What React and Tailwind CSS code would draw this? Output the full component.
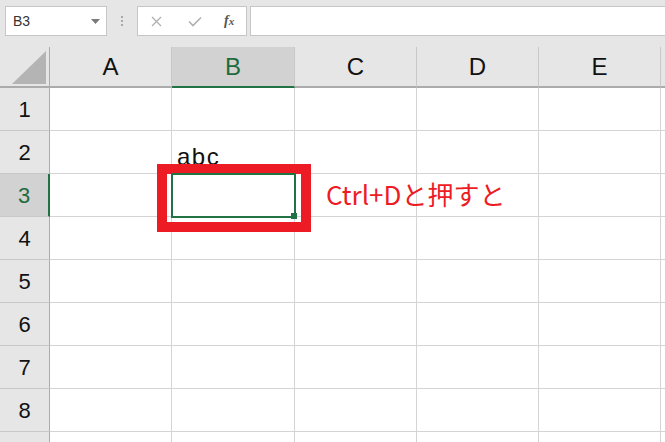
import React from 'react';

const COLS = [
  { label: 'A', w: 'w-[122px]' },
  { label: 'B', w: 'w-[123px]', active: true },
  { label: 'C', w: 'w-[122px]' },
  { label: 'D', w: 'w-[122px]' },
  { label: 'E', w: 'w-[122px]' },
];

const ROWS = [1, 2, 3, 4, 5, 6, 7, 8, 9];

function Toolbar() {
  return (
    <div className="h-[47px] bg-[#e6e6e6] flex items-start pt-[6px] pl-[5px]">
      {/* name box */}
      <div className="w-[102px] h-[30px] bg-white border border-[#c6c6c6] flex items-center justify-between pl-[7px] pr-[6px]">
        <span className="text-[14px] text-[#333]">B3</span>
        <svg width="9" height="5" viewBox="0 0 9 5">
          <path d="M0 0 L9 0 L4.5 5 Z" fill="#7a7a7a" />
        </svg>
      </div>
      <div className="w-[30px] h-[30px] flex flex-col items-center justify-center gap-[2px]">
        <span className="w-[2px] h-[2px] bg-[#a8a8a8]" />
        <span className="w-[2px] h-[2px] bg-[#a8a8a8]" />
        <span className="w-[2px] h-[2px] bg-[#a8a8a8]" />
      </div>
      {/* formula buttons */}
      <div className="w-[110px] h-[30px] bg-white border border-[#c6c6c6] flex items-center">
        <svg className="ml-[13px]" width="11" height="11" viewBox="0 0 11 11">
          <path d="M1 1 L10 10 M10 1 L1 10" stroke="#b0b0b0" strokeWidth="1.3" />
        </svg>
        <svg className="ml-[26px]" width="14" height="11" viewBox="0 0 14 11">
          <path d="M1 5.5 L5 9.5 L13 1.5" stroke="#b0b0b0" strokeWidth="1.6" fill="none" />
        </svg>
        <span className="ml-[22px] text-[14px] italic text-[#555] font-['Liberation_Serif',serif] font-bold leading-none">
          f<span className="text-[11px]">x</span>
        </span>
      </div>
      <div className="ml-[3px] flex-1 h-[30px] bg-white border border-[#c6c6c6] border-r-0" />
    </div>
  );
}

function HeaderRow() {
  return (
    <div className="flex h-[41px]">
      <div className="w-[50px] shrink-0 bg-[#e6e6e6] border-r border-[#ababab] border-b-2 border-b-[#ababab] flex items-end justify-end pr-[3px] pb-[2px]">
        <svg width="34" height="33" viewBox="0 0 34 33">
          <path d="M34 0 L34 33 L0 33 Z" fill="#b4b4b4" />
        </svg>
      </div>
      {COLS.map((c) => (
        <div
          key={c.label}
          className={`${c.w} shrink-0 border-r border-[#c8c8c8] border-b-2 flex items-center justify-center text-[24px] ${
            c.active ? 'bg-[#d2d2d2] border-b-[#217346] text-[#1e6b3e]' : 'bg-[#e6e6e6] border-b-[#ababab] text-[#111]'
          }`}
        >
          {c.label}
        </div>
      ))}
      <div className="flex-1 bg-[#e6e6e6] border-b-2 border-b-[#ababab]" />
    </div>
  );
}

function Row({ n }) {
  const active = n === 3;
  return (
    <div className="flex h-[43px]">
      <div
        className={`w-[50px] shrink-0 border-b border-[#c8c8c8] flex items-center justify-center text-[22px] ${
          active ? 'bg-[#d2d2d2] border-r-2 border-r-[#217346] text-[#1e6b3e]' : 'bg-[#e6e6e6] border-r border-r-[#ababab] text-[#111]'
        }`}
      >
        {n < 9 ? n : ''}
      </div>
      {COLS.map((c) => (
        <div key={c.label} className={`${c.w} shrink-0 bg-white border-r border-b border-[#d4d4d4] relative`}>
          {n === 2 && c.label === 'B' && (
            <span className="absolute left-[5px] bottom-[4px] text-[24px] leading-none tracking-[1.5px] text-[#111]">abc</span>
          )}
          {active && c.label === 'B' && (
            <>
              <div className="absolute z-10 left-[-15px] top-[-10px] w-[154px] h-[68px] border-[10px] border-[#ed1c24]" />
              <div className="absolute z-10 left-[-1px] top-[-1px] w-[125px] h-[45px] border-2 border-[#217346]" />
              <div className="absolute z-20 left-[119px] top-[39px] w-[6px] h-[6px] bg-[#217346]" />
              <span className="absolute z-10 left-[154px] top-[3px] whitespace-nowrap text-[26px] leading-[34px] text-[#ed1c24] font-['Noto_Sans_CJK_JP',sans-serif]">
                Ctrl+Dと押すと
              </span>
            </>
          )}
        </div>
      ))}
      <div className="flex-1 bg-white border-b border-[#d4d4d4]" />
    </div>
  );
}

export default function App() {
  return (
    <div className="w-[665px] h-[442px] overflow-hidden bg-white font-['Liberation_Sans',Arial,sans-serif]">
      <Toolbar />
      <HeaderRow />
      {ROWS.map((n) => (
        <Row key={n} n={n} />
      ))}
    </div>
  );
}
